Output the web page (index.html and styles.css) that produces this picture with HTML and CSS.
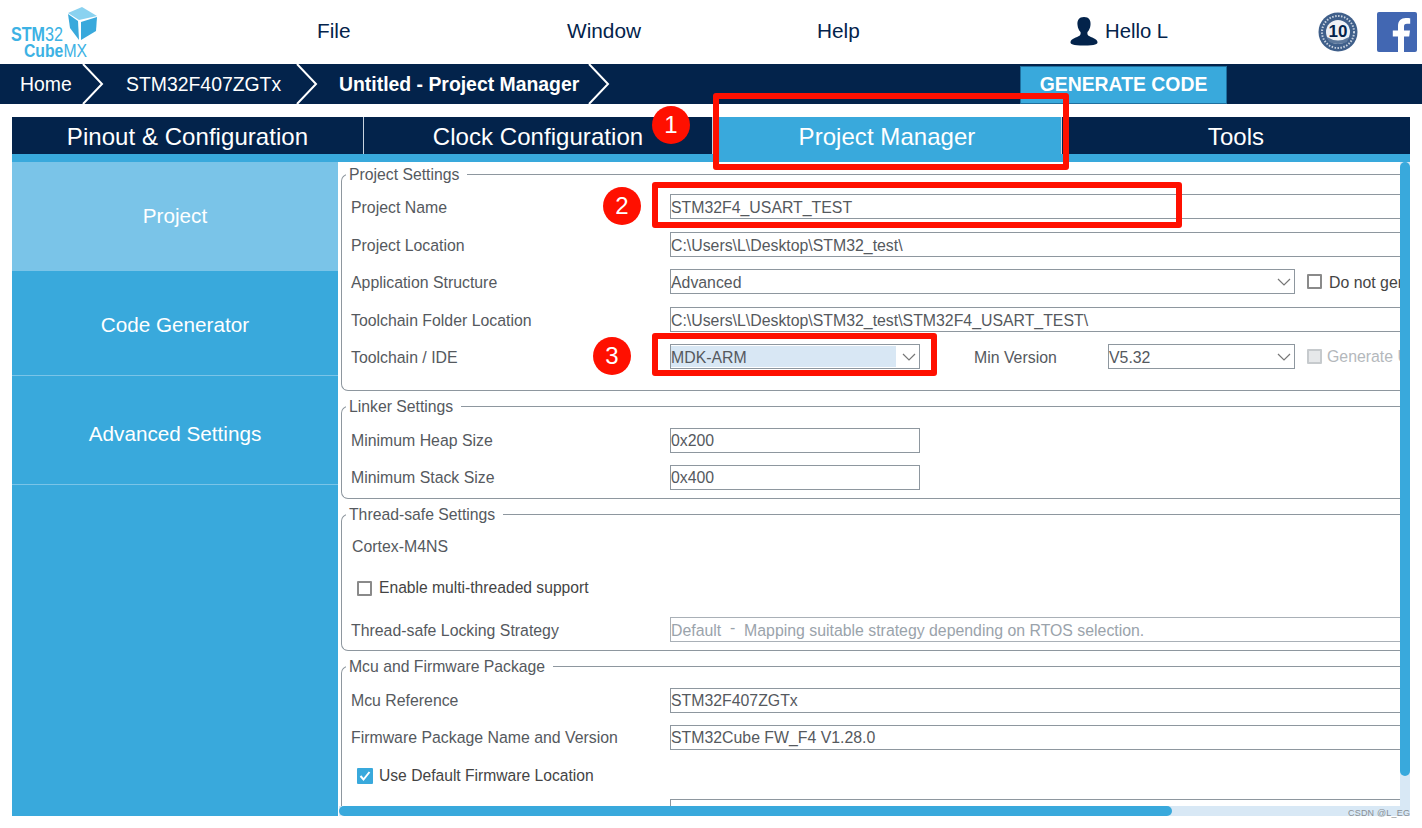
FILE: index.html
```html
<!DOCTYPE html>
<html lang="en">
<head>
<meta charset="utf-8">
<title>STM32CubeMX - Project Manager</title>
<link rel="stylesheet" href="styles.css">
</head>
<body>
<header class="top">
  <div class="logo">
    <svg width="100" height="64" viewBox="0 0 100 64">
      <path d="M68 13 L82 7 L97 16 L79 20 Z" fill="#8ad2f0"/>
      <path d="M68 14 L78 21 L79 40 L70 28 Z" fill="#39a9dc"/>
      <path d="M81 22 L97 17 L96 31 L81 40 Z" fill="#39a9dc"/>
      <text x="11" y="41" class="logo-t big" textLength="52" lengthAdjust="spacingAndGlyphs"><tspan font-weight="700">STM</tspan>32</text>
      <text x="24" y="57" class="logo-t" textLength="63" lengthAdjust="spacingAndGlyphs"><tspan font-weight="700">Cube</tspan>MX</text>
    </svg>
  </div>
  <nav class="menu">
    <span class="menu-item">File</span>
    <span class="menu-item">Window</span>
    <span class="menu-item help">Help</span>
  </nav>
  <div class="user">
    <svg width="28" height="30" viewBox="0 0 28 30"><path d="M14 1c-5 0-7 3.500-6.500 8 .3 3 1.500 5.500 3 7 .4 1.500 0 3-1 3.800C7 21.500 1 22.500 .5 26c-.2 2 2 3.500 13.500 3.500S27.700 28 27.500 26c-.5-3.500-6.500-4.500-9-6.200-1-.8-1.400-2.300-1-3.800 1.500-1.500 2.700-4 3-7C21 4.500 19 1 14 1z" fill="#03234b"/></svg>
    <span class="hello">Hello L</span>
  </div>
  <svg class="badge" width="40" height="40" viewBox="0 0 40 40">
    <circle cx="20" cy="20" r="19.500" fill="#3f5f8a"/>
    <circle cx="20" cy="20" r="16" fill="none" stroke="#c9d3e0" stroke-width="2" stroke-dasharray="1.500 1.500"/>
    <circle cx="20" cy="20" r="12" fill="#eef1f5"/>
    <path d="M9 25 Q20 32 31 25 L29 30 Q20 34 11 30 Z" fill="#5c789c"/>
    <text x="20" y="25" text-anchor="middle" class="badge-t">10</text>
  </svg>
  <svg class="fb" width="40" height="40" viewBox="0 0 40 40">
    <rect width="40" height="40" rx="2" fill="#4267b2"/>
    <path d="M27 40V24.500h5.200l.8-6H27v-3.800c0-1.800.5-3 3-3h3.200V6.300C32.600 6.200 30.800 6 28.700 6 24.100 6 21 8.800 21 14v4.500h-5.200v6H21V40z" fill="#fff"/>
  </svg>
</header>

<div class="crumbs">
  <span class="crumb c1">Home</span>
  <svg class="chev" width="22" height="40" viewBox="0 0 22 40"><path d="M1 0 L20 20 L1 40" fill="none" stroke="#fff" stroke-width="2"/></svg>
  <span class="crumb c2">STM32F407ZGTx</span>
  <svg class="chev" width="22" height="40" viewBox="0 0 22 40"><path d="M1 0 L20 20 L1 40" fill="none" stroke="#fff" stroke-width="2"/></svg>
  <span class="crumb c3">Untitled - Project Manager</span>
  <svg class="chev" width="22" height="40" viewBox="0 0 22 40"><path d="M1 0 L20 20 L1 40" fill="none" stroke="#fff" stroke-width="2"/></svg>
  <span class="generate">GENERATE CODE</span>
</div>

<div class="tabs">
  <div class="tab t1">Pinout &amp; Configuration</div>
  <div class="tab t2">Clock Configuration</div>
  <div class="tab t3 active">Project Manager</div>
  <div class="tab t4">Tools</div>
</div>
<div class="strip"></div>

<main class="main">
  <aside class="side">
    <div class="side-item current">Project</div>
    <div class="side-item second">Code Generator</div>
    <div class="side-item third">Advanced Settings</div>
  </aside>
  <section class="panel">
    <div class="panel-inner">
      <fieldset class="group g1">
        <legend>Project Settings</legend>
        <div class="rows">
          <div class="row down"><label>Project Name</label><div class="field">STM32F4_USART_TEST</div></div>
          <div class="row down"><label>Project Location</label><div class="field">C:\Users\L\Desktop\STM32_test\</div></div>
          <div class="row down"><label>Application Structure</label>
            <div class="field select wide">Advanced<svg class="caret" width="14" height="8" viewBox="0 0 14 8"><path d="M1 1l6 6 6-6" fill="none" stroke="#777" stroke-width="1.200"/></svg></div>
            <span class="box check-a"></span><span class="check-text">Do not generate the main()</span>
          </div>
          <div class="row down"><label>Toolchain Folder Location</label><div class="field">C:\Users\L\Desktop\STM32_test\STM32F4_USART_TEST\</div></div>
          <div class="row down"><label>Toolchain / IDE</label>
            <div class="field select small"><span class="picked">MDK-ARM</span><svg class="caret" width="14" height="8" viewBox="0 0 14 8"><path d="M1 1l6 6 6-6" fill="none" stroke="#777" stroke-width="1.200"/></svg></div>
            <span class="min-label">Min Version</span>
            <div class="field select ver">V5.32<svg class="caret" width="14" height="8" viewBox="0 0 14 8"><path d="M1 1l6 6 6-6" fill="none" stroke="#777" stroke-width="1.200"/></svg></div>
            <span class="box disabled check-a"></span><span class="check-text muted">Generate Under Root</span>
          </div>
        </div>
      </fieldset>
      <fieldset class="group g2">
        <legend>Linker Settings</legend>
        <div class="rows">
          <div class="row"><label>Minimum Heap Size</label><div class="field small">0x200</div></div>
          <div class="row"><label>Minimum Stack Size</label><div class="field small">0x400</div></div>
        </div>
      </fieldset>
      <fieldset class="group g3">
        <legend>Thread-safe Settings</legend>
        <div class="plain cortex">Cortex-M4NS</div>
        <div class="tick-row wider"><span class="box"></span><span class="tick-text">Enable multi-threaded support</span></div>
        <div class="row down"><label>Thread-safe Locking Strategy</label><div class="field ghost">Default &nbsp;<span class="dash">-</span>&nbsp; Mapping suitable strategy depending on RTOS selection.</div></div>
      </fieldset>
      <fieldset class="group g4">
        <legend>Mcu and Firmware Package</legend>
        <div class="rows">
          <div class="row"><label>Mcu Reference</label><div class="field">STM32F407ZGTx</div></div>
          <div class="row"><label>Firmware Package Name and Version</label><div class="field">STM32Cube FW_F4 V1.28.0</div></div>
        </div>
        <div class="tick-row use"><span class="box on"><svg width="16" height="16" viewBox="0 0 16 16"><path d="M3.500 8l3 3.500 6-7.500" fill="none" stroke="#fff" stroke-width="2"/></svg></span><span class="tick-text">Use Default Firmware Location</span></div>
        <div class="row last"><label></label><div class="field"></div></div>
      </fieldset>
    </div>
    <div class="vbar"><div class="vthumb"></div></div>
    <div class="hbar"><div class="hthumb"></div></div>
  </section>
</main>

<div class="mark m1"></div>
<div class="mark m2"></div>
<div class="mark m3"></div>
<div class="dot d1">1</div>
<div class="dot d2">2</div>
<div class="dot d3">3</div>
<div class="water">CSDN @L_EG</div>
</body>
</html>
```
FILE: styles.css
```css
* { box-sizing: border-box; }
html, body { margin: 0; height: 828px; overflow: hidden; background: #fff; }
body { font-family: "Liberation Sans", Arial, sans-serif; position: relative; }

.top { height: 64px; display: flex; align-items: center; }
.logo { width: 317px; height: 64px; flex: none; }
.logo svg { display: block; }
.logo-t { font-family: "Liberation Sans", sans-serif; font-size: 19px; fill: #3db2e4; }
.logo-t.big { font-size: 21px; }
.menu { display: flex; padding-bottom: 2px; }
.menu-item { width: 250px; font-size: 20.800px; color: #03234b; }
.menu-item.help { width: 253px; }
.user { display: flex; align-items: center; gap: 7px; width: 248px; flex: none; padding-bottom: 2px; }
.hello { font-size: 20.300px; color: #03234b; }
.badge { flex: none; }
.badge-t { font-family: "Liberation Sans", sans-serif; font-size: 17px; font-weight: 700; fill: #03234b; }
.fb { flex: none; margin-left: 19px; }

.crumbs { height: 40px; background: #03234b; display: flex; align-items: center; color: #fff; font-size: 19.400px; }
.chev { flex: none; display: block; }
.crumb { white-space: nowrap; }
.c1 { margin-left: 20px; width: 62px; }
.c2 { margin-left: 22px; width: 170px; }
.c3 { margin-left: 21px; width: 249px; font-weight: 700; }
.generate { margin-left: 410px; width: 207px; height: 38px; margin-top: 2px; padding-bottom: 2px; background: #39a9dc; border: 1px solid #1f6f9e; font-weight: 700; display: flex; align-items: center; justify-content: center; font-size: 19.400px; }

.tabs { margin: 13px 12px 0; height: 37px; display: flex; background: #03234b; }
.tab { color: #fff; font-size: 24px; display: flex; align-items: center; justify-content: center; height: 37px; padding-top: 2px; letter-spacing: .05px; }
.t1 { width: 351px; }
.t2 { width: 349px; border-left: 1px solid #c8d3df; }
.t3 { width: 350px; border-left: 1px solid #c8d3df; border-right: 1px solid #c8d3df; }
.t4 { width: 348px; }
.tab.active { background: #39a9dc; }
.strip { margin: 0 12px; height: 8px; background: #39a9dc; }

.main { margin: 0 12px; height: 654px; display: flex; }
.side { width: 326px; flex: none; background: #39a9dc; color: #fff; font-size: 20.700px; }
.side-item { display: flex; align-items: center; justify-content: center; }
.side-item.current { height: 109px; padding-bottom: 2px; background: #7ac4e8; }
.side-item.second { height: 105px; padding-top: 4px; border-bottom: 1px solid #7ac4e8; }
.side-item.third { height: 109px; padding-top: 8px; border-bottom: 1px solid #7ac4e8; }

.panel { flex: 1; min-width: 0; position: relative; overflow: hidden; }
.panel-inner { width: 1300px; padding: 3px 0 0 3px; color: #55595e; font-size: 15.850px; }

.group { margin: 0 0 6px; border: 1px solid #8e979f; border-right: 0; border-radius: 7px 0 0 7px; padding: 11px 0 0 9px; min-width: 0; }
.group legend { font-size: 15.750px; height: 18px; line-height: 20px; margin-left: -5px; padding: 0 8px 0 3px; color: #55595e; }
.g1 { height: 226px; }
.g2 { height: 102px; padding-top: 13px; }
.g3 { height: 146px; padding-top: 0; }
.g4 { height: 200px; padding-top: 13px; border-bottom: 0; border-radius: 7px 0 0 0; }

.rows { display: flex; flex-direction: column; gap: 12px; }
.g1 .row:nth-child(even) { margin-top: 1px; }
.row { display: flex; align-items: center; height: 25px; }
.row label { width: 319px; flex: none; white-space: nowrap; }
.row.down label { padding-top: 2px; }
.row.down .field { line-height: 25px; }
.field { width: 800px; height: 25px; flex: none; border: 1px solid #8e979f; padding: 0; line-height: 23px; white-space: nowrap; position: relative; background: #fff; color: #55595e; }
.field.small { width: 250px; }
.field.wide { width: 625px; }
.field.ver { width: 187px; }
.field.ghost { color: #9aa3ab; border-color: #a9b0b7; }
.dash { display: inline-block; line-height: 19px; vertical-align: top; }
.caret { position: absolute; right: 3px; top: 8px; }
.picked { display: block; background: #d8e7f4; width: 225px; height: 21px; line-height: 24px; margin-top: 1px; }
.min-label { margin-left: 54px; width: 134px; flex: none; padding-top: 2px; }
.box { width: 15px; height: 15px; flex: none; border: 2px solid #8a8a8a; border-radius: 1px; background: #fff; display: block; }
.box.check-a { margin-left: 12px; }
.box.disabled { background: #e6e8ea; border-color: #c6cacd; }
.box.on { background: #39a9dc; border: 0; width: 16px; height: 16px; }
.box.on svg { display: block; }
.check-text { margin-left: 7px; white-space: nowrap; color: #444; padding-top: 2px; }
.check-text.muted { color: #b4b8bc; margin-left: 5px; padding-top: 0; }
.plain.cortex { height: 18px; line-height: 18px; margin: 15px 0 0 1px; }
.tick-row { display: flex; align-items: center; gap: 6px; margin-left: 6px; height: 20px; font-size: 15.650px; }
.tick-row.wider { gap: 7px; }
.g3 .tick-row { margin-top: 22px; }
.g3 .row { margin-top: 19px; }
.tick-text { color: #444; white-space: nowrap; }
.tick-row.use { margin-top: 16px; }
.row.last { margin-top: 13px; }

.vbar { position: absolute; right: 0; top: 0; width: 10px; height: 644px; background: #d8e8f5; }
.vthumb { width: 10px; height: 614px; background: #39a9dc; border-radius: 5px; }
.hbar { position: absolute; left: 1px; right: 0; bottom: 0; height: 10px; background: #d8e8f5; }
.hthumb { width: 833px; height: 10px; background: #39a9dc; border-radius: 5px; }

.mark { position: absolute; border: 6px solid #ff1000; border-radius: 3px; pointer-events: none; }
.m1 { left: 713px; top: 93px; width: 356px; height: 77px; }
.m2 { left: 652px; top: 182px; width: 530px; height: 46px; }
.m3 { left: 652px; top: 333px; width: 285px; height: 43px; }
.dot { position: absolute; width: 38px; height: 38px; border-radius: 50%; background: #ff1000; color: #fff; font-size: 24px; display: flex; align-items: center; justify-content: center; }
.d1 { left: 652px; top: 106px; }
.d2 { left: 603px; top: 187px; }
.d3 { left: 593px; top: 337px; }
.water { position: absolute; left: 1348px; top: 808px; font-size: 9px; letter-spacing: .2px; color: #8a8f94; white-space: nowrap; }
```
